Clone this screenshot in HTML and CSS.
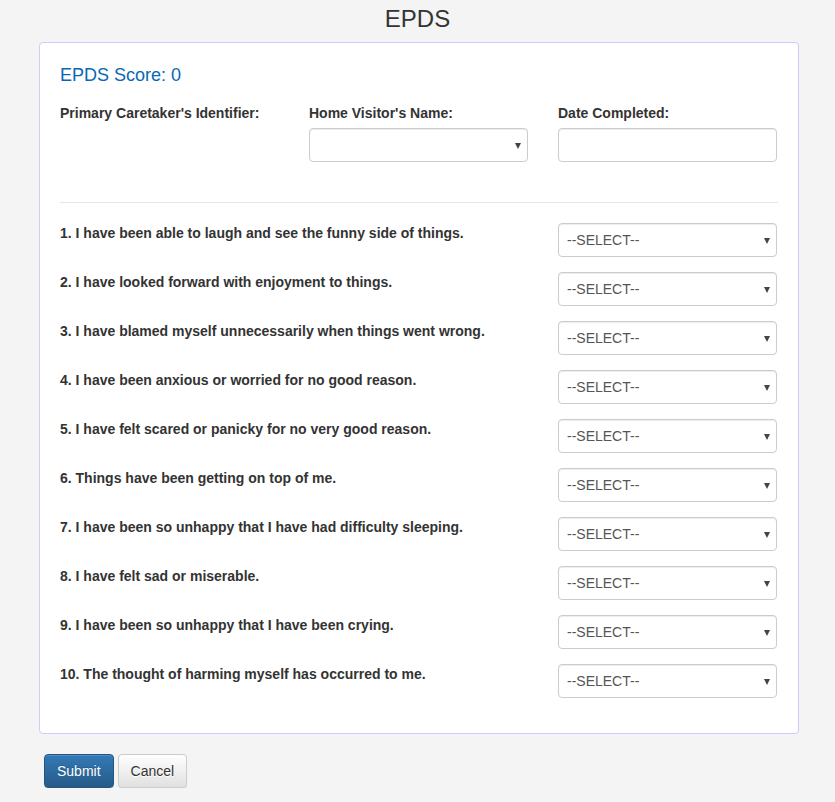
FILE: index.html
```html
<!DOCTYPE html>
<html lang="en">
<head>
<meta charset="utf-8">
<title>EPDS</title>
<link rel="stylesheet" href="styles.css">
</head>
<body>
<h1 class="page-title">EPDS</h1>
<form class="panel">
  <h4 class="score">EPDS Score: 0</h4>
  <div class="top-row">
    <div class="field">
      <label class="lbl">Primary Caretaker's Identifier:</label>
    </div>
    <div class="field">
      <label class="lbl">Home Visitor's Name:</label>
      <div class="select-wrap">
        <select class="control"><option></option></select>
        <span class="caret"></span>
      </div>
    </div>
    <div class="field">
      <label class="lbl">Date Completed:</label>
      <input class="control" type="text">
    </div>
  </div>
  <hr class="divider">
  <div class="questions">
    <div class="q"><label class="lbl qtext">1. I have been able to laugh and see the funny side of things.</label><div class="select-wrap"><select class="control"><option>--SELECT--</option></select><span class="caret"></span></div></div>
    <div class="q"><label class="lbl qtext">2. I have looked forward with enjoyment to things.</label><div class="select-wrap"><select class="control"><option>--SELECT--</option></select><span class="caret"></span></div></div>
    <div class="q"><label class="lbl qtext">3. I have blamed myself unnecessarily when things went wrong.</label><div class="select-wrap"><select class="control"><option>--SELECT--</option></select><span class="caret"></span></div></div>
    <div class="q"><label class="lbl qtext">4. I have been anxious or worried for no good reason.</label><div class="select-wrap"><select class="control"><option>--SELECT--</option></select><span class="caret"></span></div></div>
    <div class="q"><label class="lbl qtext">5. I have felt scared or panicky for no very good reason.</label><div class="select-wrap"><select class="control"><option>--SELECT--</option></select><span class="caret"></span></div></div>
    <div class="q"><label class="lbl qtext">6. Things have been getting on top of me.</label><div class="select-wrap"><select class="control"><option>--SELECT--</option></select><span class="caret"></span></div></div>
    <div class="q"><label class="lbl qtext">7. I have been so unhappy that I have had difficulty sleeping.</label><div class="select-wrap"><select class="control"><option>--SELECT--</option></select><span class="caret"></span></div></div>
    <div class="q"><label class="lbl qtext">8. I have felt sad or miserable.</label><div class="select-wrap"><select class="control"><option>--SELECT--</option></select><span class="caret"></span></div></div>
    <div class="q"><label class="lbl qtext">9. I have been so unhappy that I have been crying.</label><div class="select-wrap"><select class="control"><option>--SELECT--</option></select><span class="caret"></span></div></div>
    <div class="q"><label class="lbl qtext">10. The thought of harming myself has occurred to me.</label><div class="select-wrap"><select class="control"><option>--SELECT--</option></select><span class="caret"></span></div></div>
  </div>
</form>
<div class="actions">
  <button class="btn btn-primary" type="button">Submit</button>
  <button class="btn btn-default" type="button">Cancel</button>
</div>
</body>
</html>
```

FILE: styles.css
```css
* { box-sizing: border-box; }
html, body { margin: 0; padding: 0; }
body {
  background: #f4f4f4;
  font-family: "Liberation Sans", Arial, Helvetica, sans-serif;
  font-size: 14px;
  line-height: 20px;
  color: #333;
}
.page-title {
  margin: 6px 0 10px;
  font-size: 24px;
  line-height: 26px;
  font-weight: 500;
  text-align: center;
  color: #333;
}
.panel {
  display: block;
  margin: 0 36px 0 39px;
  padding: 20px 20px 20px;
  background: #fff;
  border: 1px solid #ccccff;
  border-radius: 4px;
}
.score {
  margin: 2px 0 18px;
  font-size: 18px;
  line-height: 20px;
  font-weight: 400;
  color: #0768b5;
}
.top-row {
  display: grid;
  grid-template-columns: repeat(3, 219px);
  column-gap: 30px;
}
.field { display: flex; flex-direction: column; }
.lbl {
  display: block;
  font-weight: 700;
  line-height: 20px;
  margin-bottom: 5px;
  color: #333;
  white-space: nowrap;
}
.control {
  display: block;
  width: 100%;
  height: 34px;
  padding: 6px 8px;
  font-family: "Liberation Sans", Arial, Helvetica, sans-serif;
  font-size: 14px;
  line-height: 20px;
  color: #555;
  background: #fff;
  border: 1px solid #ccc;
  border-radius: 4px;
  box-shadow: inset 0 1px 1px rgba(0,0,0,.075);
  -webkit-appearance: none;
  appearance: none;
  margin: 0;
}
.select-wrap { position: relative; }
.caret {
  position: absolute;
  right: 7px;
  top: 15px;
  width: 0;
  height: 0;
  border-left: 3.5px solid transparent;
  border-right: 3.5px solid transparent;
  border-top: 6px solid #444;
  pointer-events: none;
}
.divider {
  margin: 40px 0 20px;
  border: 0;
  border-top: 1px solid #e5e5e5;
  height: 0;
}
.q {
  display: grid;
  grid-template-columns: 468px 219px;
  column-gap: 30px;
  margin-bottom: 15px;
}
.qtext { margin: 0; }
.actions {
  margin: 20px 0 0 44px;
  display: flex;
  gap: 4px;
}
.btn {
  height: 34px;
  padding: 6px 12px;
  font-family: "Liberation Sans", Arial, Helvetica, sans-serif;
  font-size: 14px;
  line-height: 20px;
  border-radius: 4px;
  border: 1px solid transparent;
  cursor: pointer;
}
.btn-primary {
  color: #fff;
  background-image: linear-gradient(to bottom, #337ab7 0, #265a88 100%);
  border-color: #245580;
  text-shadow: 0 -1px 0 rgba(0,0,0,.2);
  box-shadow: inset 0 1px 0 rgba(255,255,255,.15), 0 1px 1px rgba(0,0,0,.075);
}
.btn-default {
  color: #333;
  background-image: linear-gradient(to bottom, #fff 0, #e0e0e0 100%);
  border-color: #ccc;
  text-shadow: 0 1px 0 #fff;
  box-shadow: inset 0 1px 0 rgba(255,255,255,.15), 0 1px 1px rgba(0,0,0,.075);
}
```
